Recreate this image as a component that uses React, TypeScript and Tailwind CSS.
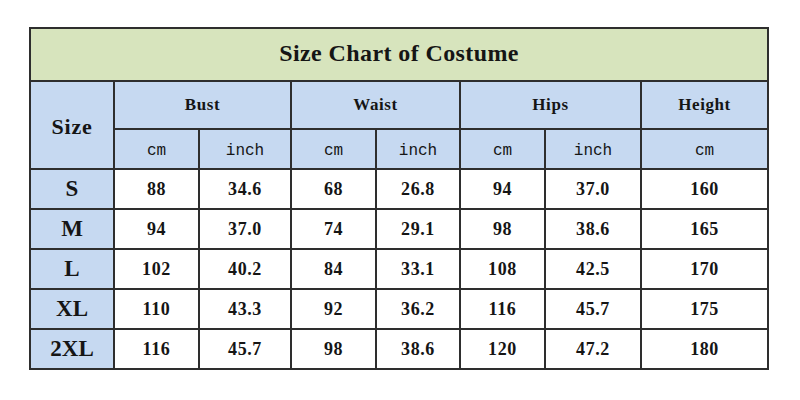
import React from "react";

const rows = [
  ["S", "88", "34.6", "68", "26.8", "94", "37.0", "160"],
  ["M", "94", "37.0", "74", "29.1", "98", "38.6", "165"],
  ["L", "102", "40.2", "84", "33.1", "108", "42.5", "170"],
  ["XL", "110", "43.3", "92", "36.2", "116", "45.7", "175"],
  ["2XL", "116", "45.7", "98", "38.6", "120", "47.2", "180"],
];

const serif = { fontFamily: '"Liberation Serif", "Times New Roman", serif' };
const mono = { fontFamily: '"Liberation Mono", "Courier New", monospace' };

export default function App() {
  const cell = "border-2 border-[#2e2e2e] text-center align-middle p-0";
  return (
    <div className="w-[800px] h-[400px] bg-white pt-[27px] pl-[29px]">
      <table
        className="table-fixed border-collapse w-[738px] text-[#151515]"
        style={serif}
      >
        <colgroup>
          <col className="w-[84px]" />
          <col className="w-[85px]" />
          <col className="w-[92px]" />
          <col className="w-[85px]" />
          <col className="w-[84px]" />
          <col className="w-[85px]" />
          <col className="w-[96px]" />
          <col className="w-[127px]" />
        </colgroup>
        <tbody>
          <tr className="h-[53px]">
            <td colSpan={8} className={`${cell} bg-[#d7e4bd] text-[24px] font-bold tracking-[0.4px] pb-[4px]`}>
              Size Chart of Costume
            </td>
          </tr>
          <tr className="h-[48px]">
            <td rowSpan={2} className={`${cell} bg-[#c6d9f1] text-[22px] font-bold tracking-[0.8px] pt-[2px]`}>
              Size
            </td>
            <td colSpan={2} className={`${cell} bg-[#c6d9f1] text-[17px] font-bold tracking-[0.6px]`}>Bust</td>
            <td colSpan={2} className={`${cell} bg-[#c6d9f1] text-[17px] font-bold tracking-[0.6px]`}>Waist</td>
            <td colSpan={2} className={`${cell} bg-[#c6d9f1] text-[17px] font-bold tracking-[0.6px]`}>Hips</td>
            <td className={`${cell} bg-[#c6d9f1] text-[17px] font-bold tracking-[0.6px]`}>Height</td>
          </tr>
          <tr className="h-[40px]">
            {["cm", "inch", "cm", "inch", "cm", "inch", "cm"].map((u, i) => (
              <td key={i} className={`${cell} bg-[#c6d9f1] text-[16px] pt-[3px]`} style={mono}>
                {u}
              </td>
            ))}
          </tr>
          {rows.map((r) => (
            <tr key={r[0]} className="h-[40px]">
              <td className={`${cell} bg-[#c6d9f1] text-[23px] font-bold`}>{r[0]}</td>
              {r.slice(1).map((v, i) => (
                <td key={i} className={`${cell} bg-white text-[18px] font-bold tracking-[0.6px]`}>
                  {v}
                </td>
              ))}
            </tr>
          ))}
        </tbody>
      </table>
    </div>
  );
}
